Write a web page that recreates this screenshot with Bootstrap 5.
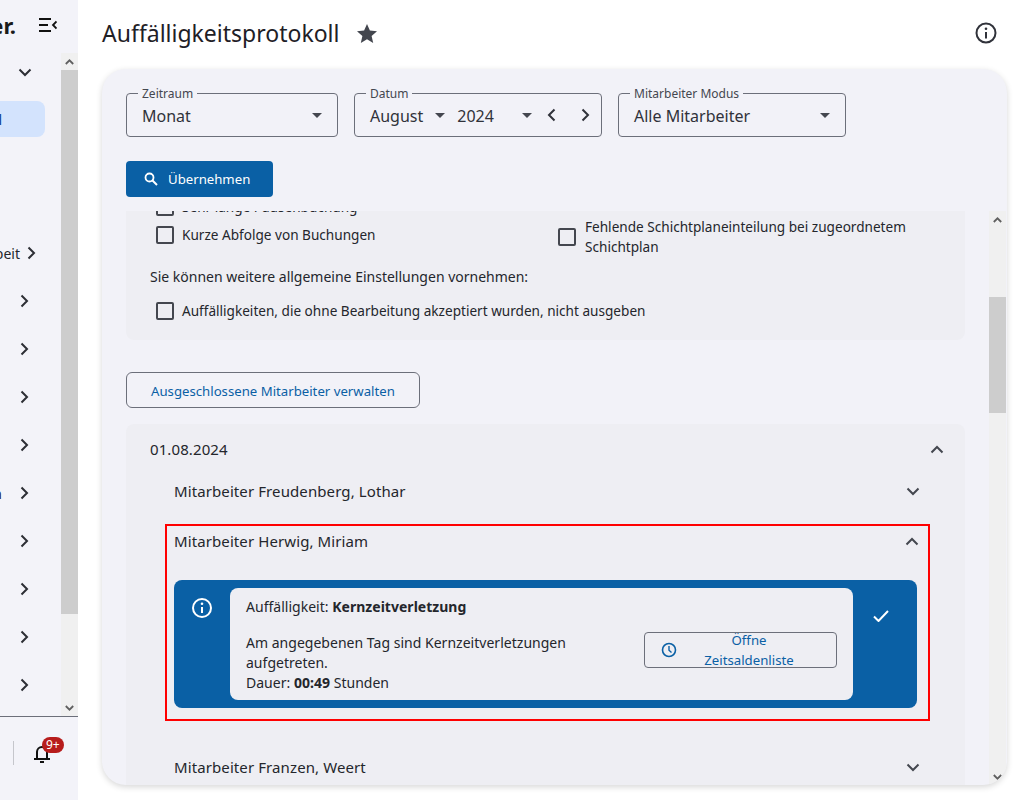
<!DOCTYPE html>
<html lang="de"><head><meta charset="utf-8"><title>Auffälligkeitsprotokoll</title>
<link href="https://cdn.jsdelivr.net/npm/bootstrap@5.3.0/dist/css/bootstrap.min.css" rel="stylesheet">
<style>
html,body{height:800px;overflow:hidden}
body{font-family:"Noto Sans",sans-serif;font-size:14px;color:#24262c;background:#fff}
svg{flex:none}
.side{width:78px;height:800px;background:#f3f3f9;flex:none}
.side-head{height:53px;padding:0 21px 3px 0;overflow:hidden}
.brand{font-size:22px;font-weight:700;color:#1a1a1a;margin-right:23px;white-space:nowrap}
.side-mid{height:663px}
.side-list{width:61px;overflow:hidden}
.s-row{height:48px;padding-right:32px;white-space:nowrap;font-size:14px}
.s-first{height:38px;padding-right:29px}
.s-active{height:36px;width:45px;margin-top:10px;margin-bottom:92px;background:#d3e3fd;border-radius:0 8px 8px 0;color:#0a3f8f;padding-right:43px}
.s-beit{padding-right:25px;gap:7px}
.s-n{gap:18px}
.sb{width:17px;background:#f0f0f0;flex:none}
.sb-arrow{height:17px;flex:none}
.sb-thumb{background:#cdcdcd;flex:none}
.side-foot{height:84px;border-top:1px solid #6c6f7a;padding-top:24px}
.foot-sep{width:1px;height:24px;background:#c5c6cc;margin-left:13px;margin-right:18px}
.bell-wrap{width:22px;height:26px}
.bell-badge{position:absolute;left:10px;top:-4px;background:#b71c1c;color:#fff;font-size:12px;line-height:16px;height:16px;padding:0 4px;border-radius:8px}
.main-col{padding:0 17px 15px 24px;min-width:0}
.title-row{height:69px;padding:0 10px 3px 0}
.page-title{font-size:23px;font-weight:400;color:#1e2026;margin:0 18px 0 0;line-height:32px}
.panel-outer{width:905px;height:716px;background:#f2f2f8;border-radius:24px;box-shadow:0 2px 6px rgba(0,0,0,.16);overflow:hidden}
.filters{padding:24px 0 0 24px;height:142px;flex:none}
.fld{position:relative;height:44px;border:1px solid #6c6f7a;border-radius:4px;font-size:16px;color:#30323a;padding:0 15px}
.fld-a{width:212px}.fld-b{width:248px;padding-right:11px}.fld-c{width:228px}
.fld-v{padding-top:2px}
.fld-label{position:absolute;left:11px;top:-8px;background:#f2f2f8;padding:0 4px;font-size:12px;line-height:15px;color:#44474f}
.caret{width:0;height:0;border-left:5.5px solid transparent;border-right:5.5px solid transparent;border-top:5.5px solid #44474f;flex:none}
.c-m{margin-left:12px;margin-right:12px}
.arr-a{margin-left:15px}.arr-b{margin-left:25px}
.apply{height:36px;width:147px;background:#0a60a5;color:#fff;border:0;border-radius:4px;font-size:13.2px;margin-top:24px;padding:2px 0 0 18px;gap:10px}
.apply svg{margin-top:-2px}
.scroll-area{min-height:0}
.scroll-main{width:887px;flex:none;overflow:hidden;padding:0 24px}
.settings{background:#eeeef3;border-radius:0 0 8px 8px;height:129px;margin-bottom:32px;padding-left:30px;overflow:hidden}
.set-rows{margin-top:-14px}
.cb.form-check-input{width:18px;height:18px;margin:0;border:2px solid #44474f;border-radius:2px;background-color:transparent;flex:none}
.set-l{height:56px;width:402px;flex:none}
.set-t{line-height:20px;gap:8px;align-items:center;font-size:13.6px}
.set-r{margin-top:20px;align-self:flex-start;gap:9px}
.set-head{margin-left:-6px;line-height:20px;margin-top:10px;margin-bottom:14px}
.out-btn{width:294px;height:36px;border:1px solid #6c6f7a;border-radius:6px;color:#0a60a5;font-size:13.2px;padding:4px 0 0 24px;background:transparent;text-align:left}
.acc{background:#eeeef3;border-radius:8px 8px 0 0;margin-top:16px;font-size:15px;letter-spacing:.1px;height:361px;overflow:hidden;position:relative}
.acc-date{height:50px;padding:0 21px 0 24px}
.acc-row{height:50px;padding:0 45px 0 48px}
.acc-row-s{height:34px}
.acc-hl{margin:16px 35px 21px 39px;border:2px solid #f00;height:197px;padding:0 11px 0 7px}
.acc-hl-head{height:31px;margin-right:-2px}
.notice{margin-top:23px;height:128px;background:#0a60a5;border-radius:8px;padding:8px 0;font-size:14px;letter-spacing:.02px}
.notice-l{width:56px;padding-top:10px;flex:none}
.notice-r{width:64px;padding:22px 8px 0 0;flex:none}
.notice-body{width:623px;background:#eeeef3;border-radius:8px;padding:9px 16px 0;line-height:20px;color:#24262c}
.nb-text{width:382px;margin-top:16px}
.open-btn{width:193px;height:36px;border:1px solid #6c6f7a;border-radius:4px;margin-top:15px;margin-left:16px;color:#0a60a5;flex:none;padding-left:16px;line-height:20px;font-size:13.2px}
.open-txt{width:110px;flex:none;text-align:center;margin:0 0 0 17px}
</style></head>
<body class="d-flex">
<aside class="side d-flex flex-column">
  <div class="side-head d-flex justify-content-end align-items-center">
    <span class="brand">er.</span>
    <svg width="18" height="14" viewBox="0 0 18 14"><path d="M0 1h12M0 7h9M0 13h12" stroke="#111" stroke-width="2" fill="none"/><path d="M17.500 3.500 14 7l3.500 3.500" stroke="#111" stroke-width="1.800" fill="none"/></svg>
  </div>
  <div class="side-mid d-flex">
    <div class="side-list">
      <div class="s-row s-first d-flex justify-content-end align-items-center"><svg width="14" height="9" viewBox="0 0 14 9"><path d="M1.500 1.500 7 7l5.500-5.500" stroke="#2c2e35" stroke-width="2" fill="none"/></svg></div>
      <div class="s-row s-active d-flex justify-content-end align-items-center">ll</div>
      <div class="s-row s-beit d-flex justify-content-end align-items-center"><span>Arbeit</span><svg width="9" height="14" viewBox="0 0 9 14"><path d="M1.500 1.500 7 7l-5.500 5.500" stroke="#2c2e35" stroke-width="2" fill="none"/></svg></div>
      <div class="s-row d-flex justify-content-end align-items-center"><svg width="9" height="14" viewBox="0 0 9 14"><path d="M1.500 1.500 7 7l-5.500 5.500" stroke="#2c2e35" stroke-width="2" fill="none"/></svg></div>
      <div class="s-row d-flex justify-content-end align-items-center"><svg width="9" height="14" viewBox="0 0 9 14"><path d="M1.500 1.500 7 7l-5.500 5.500" stroke="#2c2e35" stroke-width="2" fill="none"/></svg></div>
      <div class="s-row d-flex justify-content-end align-items-center"><svg width="9" height="14" viewBox="0 0 9 14"><path d="M1.500 1.500 7 7l-5.500 5.500" stroke="#2c2e35" stroke-width="2" fill="none"/></svg></div>
      <div class="s-row d-flex justify-content-end align-items-center"><svg width="9" height="14" viewBox="0 0 9 14"><path d="M1.500 1.500 7 7l-5.500 5.500" stroke="#2c2e35" stroke-width="2" fill="none"/></svg></div>
      <div class="s-row s-n d-flex justify-content-end align-items-center"><span>Planen</span><svg width="9" height="14" viewBox="0 0 9 14"><path d="M1.500 1.500 7 7l-5.500 5.500" stroke="#2c2e35" stroke-width="2" fill="none"/></svg></div>
      <div class="s-row d-flex justify-content-end align-items-center"><svg width="9" height="14" viewBox="0 0 9 14"><path d="M1.500 1.500 7 7l-5.500 5.500" stroke="#2c2e35" stroke-width="2" fill="none"/></svg></div>
      <div class="s-row d-flex justify-content-end align-items-center"><svg width="9" height="14" viewBox="0 0 9 14"><path d="M1.500 1.500 7 7l-5.500 5.500" stroke="#2c2e35" stroke-width="2" fill="none"/></svg></div>
      <div class="s-row d-flex justify-content-end align-items-center"><svg width="9" height="14" viewBox="0 0 9 14"><path d="M1.500 1.500 7 7l-5.500 5.500" stroke="#2c2e35" stroke-width="2" fill="none"/></svg></div>
      <div class="s-row d-flex justify-content-end align-items-center"><svg width="9" height="14" viewBox="0 0 9 14"><path d="M1.500 1.500 7 7l-5.500 5.500" stroke="#2c2e35" stroke-width="2" fill="none"/></svg></div>
    </div>
    <div class="sb d-flex flex-column">
      <div class="sb-arrow d-flex align-items-center justify-content-center"><svg width="9" height="6" viewBox="0 0 9 6"><path d="M.8 5 4.500 1.300 8.200 5" stroke="#606060" stroke-width="1.800" fill="none"/></svg></div>
      <div class="sb-thumb" style="height:544px"></div>
      <div class="flex-grow-1"></div>
      <div class="sb-arrow d-flex align-items-center justify-content-center"><svg width="9" height="6" viewBox="0 0 9 6"><path d="M.8 1 4.500 4.700 8.200 1" stroke="#606060" stroke-width="1.800" fill="none"/></svg></div>
    </div>
  </div>
  <div class="side-foot d-flex align-items-start">
    <span class="foot-sep"></span>
    <span class="bell-wrap position-relative d-block">
      <svg width="20" height="26" viewBox="0 0 20 26"><path d="M5 17v-6a5 5 0 0 1 10 0v6M2 18h16" stroke="#111" stroke-width="2" fill="none"/><path d="M8 21h4" stroke="#111" stroke-width="2"/></svg>
      <span class="bell-badge">9+</span>
    </span>
  </div>
</aside>
<main class="main-col flex-grow-1 d-flex flex-column">
  <div class="title-row d-flex align-items-center">
    <h1 class="page-title">Auffälligkeitsprotokoll</h1>
    <svg width="20" height="19" viewBox="0 0 20 19"><path d="M10 0l2.900 6.500 7.100.7-5.400 4.700 1.600 7L10 15.200 3.800 18.900l1.600-7L0 7.200l7.100-.7z" fill="#43464e"/></svg>
    <svg class="ms-auto" width="22" height="22" viewBox="0 0 22 22"><circle cx="11" cy="11" r="9.500" fill="none" stroke="#30323a" stroke-width="2"/><path d="M11 10v6.500" stroke="#30323a" stroke-width="2"/><circle cx="11" cy="6.700" r="1.300" fill="#30323a"/></svg>
  </div>
  <section class="panel-outer d-flex flex-column">
    <div class="filters">
      <div class="d-flex gap-3">
        <div class="fld fld-a d-flex align-items-center"><span class="fld-label">Zeitraum</span><span class="fld-v">Monat</span><span class="caret ms-auto me-0"></span></div>
        <div class="fld fld-b d-flex align-items-center"><span class="fld-label">Datum</span><span class="fld-v">August</span><span class="caret c-m"></span><span class="fld-v">2024</span><span class="caret ms-auto"></span>
          <svg class="arr-a" width="9" height="14" viewBox="0 0 9 14"><path d="M7.500 1.500 2 7l5.500 5.500" stroke="#30323a" stroke-width="2" fill="none"/></svg>
          <svg class="arr-b" width="9" height="14" viewBox="0 0 9 14"><path d="M1.500 1.500 7 7l-5.500 5.500" stroke="#30323a" stroke-width="2" fill="none"/></svg></div>
        <div class="fld fld-c d-flex align-items-center"><span class="fld-label">Mitarbeiter Modus</span><span class="fld-v">Alle Mitarbeiter</span><span class="caret ms-auto"></span></div>
      </div>
      <button class="btn apply d-flex align-items-center" type="button">
        <svg width="14" height="14" viewBox="0 0 14 14"><circle cx="5.500" cy="5.500" r="4" fill="none" stroke="#fff" stroke-width="1.800"/><path d="M8.500 8.500 13 13" stroke="#fff" stroke-width="2"/></svg>Übernehmen</button>
    </div>
    <div class="scroll-area d-flex flex-grow-1">
      <div class="scroll-main">
        <div class="settings">
          <div class="set-rows">
            <div class="d-flex">
              <div class="set-l">
                <div class="d-flex set-t mb-2"><input class="cb form-check-input" type="checkbox"><span>Sehr lange Pausenbuchung</span></div>
                <div class="d-flex set-t"><input class="cb form-check-input" type="checkbox"><span>Kurze Abfolge von Buchungen</span></div>
              </div>
              <div class="d-flex set-t set-r flex-grow-1 pe-3"><input class="cb form-check-input" type="checkbox"><span>Fehlende Schichtplaneinteilung bei zugeordnetem Schichtplan</span></div>
            </div>
            <div class="set-head">Sie können weitere allgemeine Einstellungen vornehmen:</div>
            <div class="d-flex set-t"><input class="cb form-check-input" type="checkbox"><span>Auffälligkeiten, die ohne Bearbeitung akzeptiert wurden, nicht ausgeben</span></div>
          </div>
        </div>
        <button class="btn out-btn" type="button">Ausgeschlossene Mitarbeiter verwalten</button>
        <div class="acc">
          <div class="acc-date d-flex justify-content-between align-items-center"><span>01.08.2024</span><svg width="14" height="9" viewBox="0 0 14 9"><path d="M1.500 7.500 7 2l5.500 5.500" stroke="#44474f" stroke-width="2" fill="none"/></svg></div>
          <div class="acc-row acc-row-s d-flex justify-content-between align-items-center"><span>Mitarbeiter Freudenberg, Lothar</span><svg width="14" height="9" viewBox="0 0 14 9"><path d="M1.500 1.500 7 7l5.500-5.500" stroke="#44474f" stroke-width="2" fill="none"/></svg></div>
          <div class="acc-hl">
            <div class="acc-hl-head d-flex justify-content-between align-items-center"><span>Mitarbeiter Herwig, Miriam</span><svg width="14" height="9" viewBox="0 0 14 9"><path d="M1.500 7.500 7 2l5.500 5.500" stroke="#44474f" stroke-width="2" fill="none"/></svg></div>
            <div class="notice d-flex">
              <div class="notice-l d-flex justify-content-center align-items-start"><svg width="20" height="20" viewBox="0 0 20 20"><circle cx="10" cy="10" r="9" fill="none" stroke="#fff" stroke-width="2"/><path d="M10 9v6" stroke="#fff" stroke-width="2"/><circle cx="10" cy="5.800" r="1.300" fill="#fff"/></svg></div>
              <div class="notice-body">
                <div>Auffälligkeit: <b>Kernzeitverletzung</b></div>
                <div class="d-flex">
                  <div class="nb-text">Am angegebenen Tag sind Kernzeitverletzungen aufgetreten.<br>Dauer: <b>00:49</b> Stunden</div>
                  <div class="open-btn d-flex align-items-center">
                    <svg width="16" height="16" viewBox="0 0 16 16"><circle cx="8" cy="8" r="6.500" fill="none" stroke="#0a60a5" stroke-width="1.600"/><path d="M8 4v4.200l2.500 2.300" fill="none" stroke="#0a60a5" stroke-width="1.400"/></svg>
                    <span class="open-txt">Öffne Zeitsaldenliste</span>
                  </div>
                </div>
              </div>
              <div class="notice-r d-flex justify-content-center align-items-start"><svg width="16" height="12" viewBox="0 0 16 12"><path d="M1 6.500 5.500 11 15 1" fill="none" stroke="#fff" stroke-width="2"/></svg></div>
            </div>
          </div>
          <div class="acc-row d-flex justify-content-between align-items-center"><span>Mitarbeiter Franzen, Weert</span><svg width="14" height="9" viewBox="0 0 14 9"><path d="M1.500 1.500 7 7l5.500-5.500" stroke="#44474f" stroke-width="2" fill="none"/></svg></div>
        </div>
      </div>
      <div class="sb d-flex flex-column">
        <div class="sb-arrow d-flex align-items-center justify-content-center"><svg width="9" height="6" viewBox="0 0 9 6"><path d="M.8 5 4.500 1.300 8.200 5" stroke="#606060" stroke-width="1.800" fill="none"/></svg></div>
        <div class="sb-thumb" style="height:116px;margin-top:69px"></div>
        <div class="flex-grow-1"></div>
        <div class="sb-arrow d-flex align-items-center justify-content-center"><svg width="9" height="6" viewBox="0 0 9 6"><path d="M.8 1 4.500 4.700 8.200 1" stroke="#606060" stroke-width="1.800" fill="none"/></svg></div>
      </div>
    </div>
  </section>
</main>
</body></html>
